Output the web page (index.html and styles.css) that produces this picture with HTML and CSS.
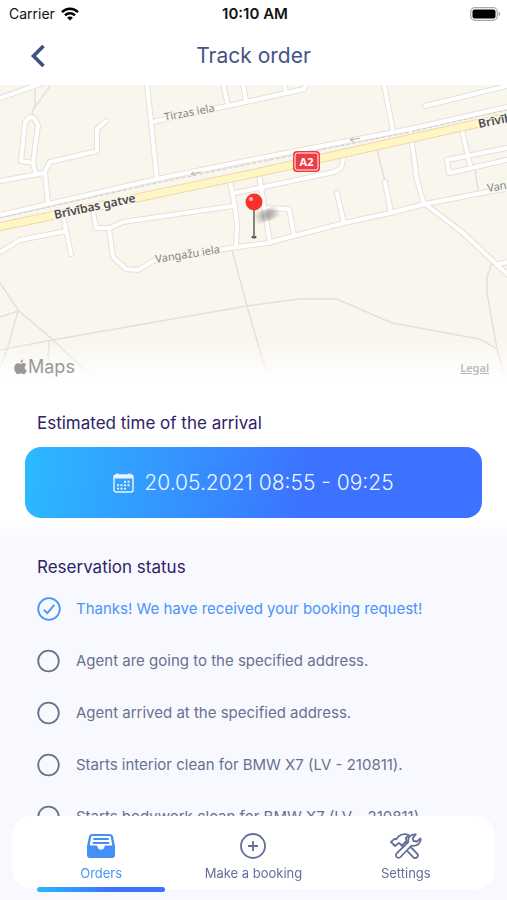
FILE: index.html
```html
<!DOCTYPE html>
<html lang="en">
  <head>
    <meta charset="UTF-8" />
    <meta name="viewport" content="width=device-width, initial-scale=1.0" />
    <title>Track order</title>
    <link rel="stylesheet" href="styles.css">
  </head>
  <body>
    <div class="statusbar">
      <div class="carrier">
        <span>Carrier</span>
        <svg width="18" height="14" viewBox="0 0 18 14">
          <g fill="none" stroke="#000" stroke-width="2.4">
            <path d="M1 5.2C5.4 0.6 12.600 0.600 17 5.200" />
            <path d="M4 8.300c2.800-2.800 7.200-2.800 10 0" />
          </g>
          <path d="M9 13.600L6.100 10.700c1.600-1.500 4.200-1.500 5.800 0z" />
        </svg>
      </div>
      <div class="clock">10:10 AM</div>
      <div class="battery">
        <svg width="31" height="14" viewBox="0 0 31 14">
          <rect x="0.700" y="0.700" width="26.600" height="12.600" rx="4" fill="#fff" stroke="#aaa" stroke-width="1.200" />
          <rect x="2.500" y="2.500" width="23" height="9" rx="2" />
          <path d="M28.600 4.800c2.400 0.800 2.400 3.600 0 4.400z" fill="#aaa" />
        </svg>
      </div>
    </div>

    <header class="header">
      <button class="back" type="button" aria-label="Back">
        <svg width="16" height="24" viewBox="0 0 16 24">
          <path d="M13.500 2L3.500 12l10 10" fill="none" stroke="#3f4f82" stroke-width="3.600" />
        </svg>
      </button>
      <h1>Track order</h1>
    </header>

    <main>
      <section class="map">
        <svg class="map-canvas" viewBox="0 85 507 298" preserveAspectRatio="xMidYMid slice" role="img" aria-label="Map">
          <defs>
            <g id="streets">
              <path d="M0 98L40 84" />
              <path d="M30 117L25 122L21 161L33 163L38 125L34 118ZM33 163L36 175" />
              <path d="M0 181L44 173L50 162L97 151L97 129L106 121" />
              <path d="M45 173L48 203" />
              <path d="M147 84L157 179" />
              <path d="M152 122L260 99L304 89L306 84" />
              <path d="M223 84L228 105M243 84L246 101M284 84L286 92" />
              <path d="M0 215L157 179L260 158L410 129L507 107" />
              <path d="M63 216L71 254M0 252L20 240L66 231" />
              <path d="M93 210L96 228L110 228L123 222L233 206" />
              <path d="M109 228L113 257L126 269L138 270L153 261L217 250L267 243L344 223L390 213L425 204L487 192L507 189" />
              <path d="M230 182L235 207L237 225L236 247" />
              <path d="M235 193L334 172L341 168L344 156" />
              <path d="M259 175L264 205L270 243M265 208L289 209L294 235" />
              <path d="M337 193L344 223M385 182L391 213" />
              <path d="M384 84L393 131M410 129L417 180L424 204" />
              <path d="M425 106L507 86" />
              <path d="M462 130L470 165M507 148L447 160L449 173L507 160" />
              <path d="M425 204L462 232L508 275M499 264L508 262" />
            </g>
            <linearGradient id="fade" x1="0" y1="0" x2="0" y2="1">
              <stop offset="0" stop-color="#fff" stop-opacity="0" />
              <stop offset="1" stop-color="#fff" />
            </linearGradient>
            <filter id="soft"><feGaussianBlur stdDeviation="3" /></filter>
          </defs>

          <rect y="80" width="507" height="310" fill="#f9f6ee" />

          <g class="trails">
            <path d="M0 283L19 311L52 339L90 375M0 317L18 311L7 350L0 367" />
            <path d="M0 350L52 340L247 306L299 299L337 299L392 323L480 339L497 349L504 373" />
            <path d="M49 341L48 362M232 250L247 306L266 372" />
            <path d="M492 263L487 277L487 293L497 349" />
            <path d="M35 86L35 104L31 117M50 86L33 110M377 150L385 182M475 168L478 190" />
          </g>

          <use href="#streets" class="street-edge" />
          <use href="#streets" class="street" />
          <path class="rail" d="M0 218L157 183L260 162L410 132L507 110" />

          <path d="M-2 227L260 172L507 117" fill="none" stroke="#f5d5a4" stroke-width="9" />
          <path d="M-2 227L260 172L507 117" fill="none" stroke="#fff6c6" stroke-width="7" />
          <path class="arrow" d="M191 174l10-2M194 171.500l-3 2.500l4 1.500M350 140l10-2M353 137.500l-3 2.500l4 1.500" />

          <g class="label">
            <text transform="translate(165 121) rotate(-11)">Tirzas iela</text>
            <text transform="translate(156 263) rotate(-9)">Vangažu iela</text>
            <text transform="translate(488 192) rotate(-10)">Van</text>
          </g>
          <g class="label label-main">
            <text transform="translate(55 219) rotate(-12)">Brīvības gatve</text>
            <text transform="translate(479 128) rotate(-11)">Brīvīb</text>
          </g>

          <rect x="293" y="151" width="27" height="21" rx="4" fill="#ef3b41" />
          <rect x="295" y="153" width="23" height="17" rx="2.500" fill="#ef3b41" stroke="#fff" />
          <text class="shield" x="306.500" y="165.500">A2</text>

          <ellipse cx="267" cy="215" rx="10" ry="5" fill="#000" opacity="0.350" transform="rotate(-20 267 215)" filter="url(#soft)" />
          <ellipse cx="254" cy="237" rx="2.600" ry="1.600" fill="#555" />
          <path d="M254 208v29" stroke="#85857f" stroke-width="2" />
          <circle cx="254" cy="202" r="8.500" fill="#fb2f2b" />
          <circle cx="251" cy="199" r="2" fill="#ffc4bd" />

          <rect y="340" width="507" height="40" fill="url(#fade)" />
          <rect y="379" width="507" height="10" fill="#fff" />
        </svg>
        <div class="map-credit">
          <span class="maps-logo">
            <svg width="13" height="16" viewBox="0 0 13 16" fill="#999">
              <path d="M9.200 0.500c0.100 1.700-1.200 3.200-2.800 3.300C6.300 2.200 7.600 0.700 9.200 0.500zM6.600 4.900c0.700 0 1.500-0.800 2.900-0.800c1.200 0 2.200 0.600 2.800 1.500c-2.300 1.500-2 4.800 0.500 5.800c-0.600 1.700-1.800 3.900-3.200 3.900c-1.100 0-1.500-0.700-2.800-0.700s-1.700 0.700-2.700 0.700C2.300 15.300 0.300 12 0.300 9c0-3 1.800-4.800 3.800-4.800c1.200 0 1.900 0.700 2.500 0.700z" />
            </svg>
            Maps
          </span>
          <a class="legal" href="#legal">Legal</a>
        </div>
      </section>

      <section class="arrival">
        <h2>Estimated time of the arrival</h2>
        <button class="time" type="button">
          <svg width="21" height="20" viewBox="0 0 21 20">
            <rect x="1" y="2" width="19" height="17" rx="2" fill="none" stroke="#e8f5ff" stroke-width="1.400" />
            <path d="M1 2h19v3.600H1zM3.500 0.500h2v3h-2zM15.500 0.500h2v3h-2z" fill="#e8f5ff" />
            <path d="M11 8.800h7M4 12.200h14M4 15.600h10.500" stroke="#e8f5ff" stroke-width="1.900" stroke-dasharray="2 1.500" />
          </svg>
          <span>20.05.2021 08:55 - 09:25</span>
        </button>
      </section>

      <section class="reservation">
        <h2>Reservation status</h2>
        <ol class="steps">
          <li class="done">
            <svg width="24" height="24" viewBox="0 0 24 24">
              <circle cx="12" cy="12" r="10.800" />
              <path d="M6.800 12.600l3.500 3.600l7-8.400" />
            </svg>
            <span>Thanks! We have received your booking request!</span>
          </li>
          <li>
            <svg width="24" height="24" viewBox="0 0 24 24"><circle cx="11.500" cy="12" r="10.300" /></svg>
            <span>Agent are going to the specified address.</span>
          </li>
          <li>
            <svg width="24" height="24" viewBox="0 0 24 24"><circle cx="11.500" cy="12" r="10.300" /></svg>
            <span>Agent arrived at the specified address.</span>
          </li>
          <li>
            <svg width="24" height="24" viewBox="0 0 24 24"><circle cx="11.500" cy="12" r="10.300" /></svg>
            <span>Starts interior clean for BMW X7 (LV - 210811).</span>
          </li>
          <li>
            <svg width="24" height="24" viewBox="0 0 24 24"><circle cx="11.500" cy="12" r="10.300" /></svg>
            <span>Starts bodywork clean for BMW X7 (LV - 210811).</span>
          </li>
        </ol>
      </section>
    </main>

    <nav class="tabs">
      <a class="tab active" href="#orders">
        <svg width="30" height="26" viewBox="0 0 30 26">
          <path d="M6 1h18a3 3 0 0 1 3 2.500L29 13v9a3 3 0 0 1-3 3H4a3 3 0 0 1-3-3v-9L3 3.500A3 3 0 0 1 6 1z" fill="#4490f5" />
          <path d="M6.500 3h17a1.500 1.500 0 0 1 1.400 1.200L26.300 12.500H20c-1 0-1.400 0.500-1.600 1.400c-0.400 1.700-1.700 2.800-3.400 2.800s-3-1.100-3.400-2.800c-0.200-0.900-0.600-1.400-1.600-1.400H3.700L5.100 4.200A1.500 1.500 0 0 1 6.500 3z" fill="#fff" />
          <path d="M8 6h14M7.500 10h15" stroke="#4490f5" stroke-width="2" stroke-linecap="round" />
        </svg>
        <span>Orders</span>
      </a>
      <a class="tab" href="#booking">
        <svg width="26" height="26" viewBox="0 0 26 26" fill="none" stroke="#656f98" stroke-width="1.800">
          <circle cx="13" cy="13" r="12" />
          <path d="M13 8v10M8 13h10" />
        </svg>
        <span>Make a booking</span>
      </a>
      <a class="tab" href="#settings">
        <svg width="32" height="26" viewBox="0 0 32 26" fill="#fff" stroke="#656f98" stroke-width="1.800" stroke-linejoin="round">
          <path d="M11 11.500L14.500 8L27 20.500a2.500 2.500 0 0 1-3.600 3.800z" />
          <path d="M8.500 3.500C11.500 0.800 15.500 0.600 19 2.200L15.800 5L16.500 8L12 12.500L9 10L5 13L1 9L4.500 5.800L6.500 6z" />
          <path d="M21.500 12.500L10.500 24a2.600 2.600 0 0 1-3.800-3.700L18.300 9C17.300 4.500 21 0.800 25.800 1.500L22.800 4.800L23.500 8L27 8.500L30.500 5.500C31.500 10 26.500 13.800 21.500 12.500z" />
        </svg>
        <span>Settings</span>
      </a>
    </nav>
  </body>
</html>
```
FILE: styles.css
```css
* {
  box-sizing: border-box;
}
body {
  margin: 0;
  height: 100vh;
  display: flex;
  flex-direction: column;
  overflow: hidden;
  background-color: #fff;
  font-family: Inter, "Liberation Sans", sans-serif;
}
h1,
h2 {
  margin: 0;
  font-weight: 400;
}
button {
  padding: 0;
  border: none;
  background: none;
  font-family: inherit;
  cursor: pointer;
}
a {
  color: inherit;
}
svg {
  display: block;
  flex-shrink: 0;
}

.statusbar {
  display: grid;
  grid-template-columns: 1fr auto 1fr;
  align-items: center;
  height: 27px;
  padding: 0 6px 0 9px;
  font-size: 14px;
  color: #111;
}
.carrier {
  display: flex;
  align-items: center;
  gap: 6px;
}
.clock {
  font-size: 15px;
  font-weight: 600;
}
.battery {
  justify-self: end;
}

.header {
  display: grid;
  grid-template-columns: 48px 1fr 48px;
  align-items: center;
  height: 58px;
  padding: 0 14px;
  color: #445488;
}
.back {
  display: flex;
  justify-content: center;
  align-items: center;
  height: 48px;
}
.header h1 {
  text-align: center;
  font-size: 21px;
  line-height: 28px;
}

main {
  flex: 1;
  display: flex;
  flex-direction: column;
  min-height: 0;
}

.map {
  flex-shrink: 0;
  display: grid;
}
.map-canvas,
.map-credit {
  grid-area: 1 / 1;
}
.map-canvas {
  width: 100%;
  height: 298px;
}
.map-credit {
  align-self: end;
  display: flex;
  justify-content: space-between;
  align-items: center;
  padding: 0 18px 4px 14px;
  color: #999;
}
.maps-logo {
  display: flex;
  align-items: center;
  gap: 1px;
  font-size: 18px;
  line-height: 24px;
}
.legal {
  font-family: "Noto Sans", sans-serif;
  font-size: 11px;
  font-weight: 600;
  color: #bbb;
}
.trails {
  fill: none;
  stroke: #e5e0d5;
  stroke-width: 1.5;
}
.street-edge,
.street {
  fill: none;
  stroke-linejoin: round;
  stroke-linecap: round;
}
.street-edge {
  stroke: #e4e0da;
  stroke-width: 6;
}
.street {
  stroke: #fff;
  stroke-width: 4;
}
.rail {
  fill: none;
  stroke: #d3d0cb;
  stroke-dasharray: 4 2;
}
.arrow {
  fill: none;
  stroke: #b5b5b5;
}
.label {
  font-family: "Noto Sans", sans-serif;
  font-size: 11px;
  fill: #858585;
  stroke: #f9f6ee;
  stroke-width: 3;
  paint-order: stroke;
}
.label-main {
  font-size: 12px;
  font-weight: 600;
  fill: #4c4c4c;
}
.shield {
  font-family: "Noto Sans", sans-serif;
  font-size: 11px;
  font-weight: 700;
  text-anchor: middle;
  fill: #fff;
}

h2 {
  padding: 0 12px;
  font-size: 17px;
  line-height: 24px;
  color: #2f2265;
}
.arrival {
  padding: 28px 25px;
  background: linear-gradient(#fff 84%, #f8f9ff);
}
.time {
  display: flex;
  justify-content: center;
  align-items: center;
  gap: 10px;
  width: 100%;
  height: 71px;
  margin-top: 12px;
  border-radius: 16px;
  background: linear-gradient(100deg, #2cbaff, #3c72ff 62%);
  color: #eef6ff;
  font-size: 21px;
  font-weight: 300;
}

.reservation {
  flex: 1;
  padding: 9px 25px;
  background-color: #f8f9ff;
}
.steps {
  display: flex;
  flex-direction: column;
  gap: 28px;
  margin: 18px 0 0;
  padding: 0 12px;
  list-style: none;
}
.steps li {
  display: flex;
  align-items: center;
  gap: 15px;
  font-size: 15px;
  line-height: 24px;
  white-space: nowrap;
  color: #69718f;
}
.steps svg {
  fill: none;
  stroke: #69718f;
  stroke-width: 1.8;
}
.steps .done {
  color: #4a94f8;
}
.steps .done svg {
  stroke: #4a94f8;
}

/* floats over the end of the list */
.tabs {
  position: fixed;
  left: 12px;
  right: 12px;
  bottom: 11px;
  display: grid;
  grid-template-columns: repeat(3, 1fr);
  padding: 0 13px;
  border-radius: 20px;
  background-color: #fff;
}
.tab {
  display: flex;
  flex-direction: column;
  align-items: center;
  gap: 4px;
  height: 73px;
  padding-top: 17px;
  font-size: 13px;
  line-height: 20px;
  text-decoration: none;
  color: #656f98;
}
.tab.active {
  color: #4a94f8;
}
.tab.active::after {
  content: "";
  flex-shrink: 0;
  width: 84%;
  height: 5px;
  border-radius: 3px;
  background: linear-gradient(90deg, #2cb4ff, #3c72ff 60%);
}
```
